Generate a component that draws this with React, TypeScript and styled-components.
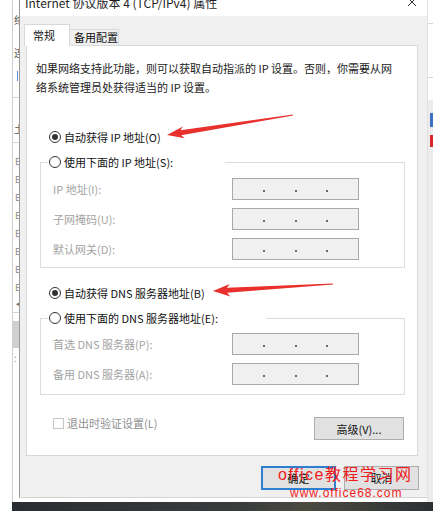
import styled, { createGlobalStyle } from "styled-components";

const GlobalStyle = createGlobalStyle`
  html, body {
    margin: 0;
    padding: 0;
    background: #fff;
  }
  body {
    font-family: "Noto Sans CJK SC", "Liberation Sans", sans-serif;
    overflow: hidden;
  }
`;

const Screen = styled.div`
  position: relative;
  width: 433px;
  height: 511px;
  overflow: hidden;
  display: flex;
  flex-direction: column;
  background: #fff;
`;

const Desktop = styled.div`
  display: flex;
  height: 502px;
`;

// strip of the window behind the dialog, on the left
const Outside = styled.div`
  width: 12px;
  flex: none;
  background: #fff;
`;

const BackWindow = styled.div`
  width: 6px;
  flex: none;
  border-left: 1px solid #cfcfcf;
  background: #fff;
  overflow: hidden;
  display: flex;
  flex-direction: column;
`;

const Frag = styled.div<{ $top: number; $color?: string }>`
  margin-top: ${(p) => p.$top}px;
  height: 12px;
  line-height: 12px;
  font-size: 10px;
  color: ${(p) => p.$color || "#555"};
  padding-left: 1px;
  white-space: nowrap;
`;

const IconFrag = styled.div`
  height: 18px;
  line-height: 18px;
  font-size: 9px;
  color: #8a8a8a;
  padding-left: 2px;
`;

const Rule = styled.div<{ $top: number }>`
  margin-top: ${(p) => p.$top}px;
  height: 1px;
  background: #d5d5d5;
`;

const Thumb = styled.div`
  margin-top: 8px;
  height: 27px;
  background: #d0d0d0;
`;

const Tick = styled.div`
  margin-top: 12px;
  margin-left: 4px;
  width: 1px;
  height: 10px;
  background: #5b8fd6;
`;

const Dialog = styled.div`
  width: 408px;
  height: 498px;
  flex: none;
  border-left: 1px solid #9a9a9a;
  border-bottom: 1px solid #d4d4d4;
  background: #f0f0f0;
  display: flex;
  flex-direction: column;
  box-sizing: border-box;
`;

const TitleBar = styled.div`
  height: 16px;
  flex: none;
  background: #fff;
  overflow: hidden;
  display: flex;
  justify-content: space-between;
  padding: 0 11px 0 5px;
`;

const TitleText = styled.div`
  margin-top: -5px;
  font-size: 12px;
  line-height: 16px;
  color: #1f1f1f;
  white-space: nowrap;
`;

const Body = styled.div`
  padding: 8px 9px 0 6px;
  display: flex;
  flex-direction: column;
`;

const TabBar = styled.div`
  display: flex;
  align-items: flex-end;
  height: 21px;
  margin-left: -2px;
`;

const Tab = styled.div<{ $active?: boolean }>`
  position: relative;
  z-index: 1;
  box-sizing: border-box;
  border: 1px solid #d9d9d9;
  border-bottom: none;
  font-size: 11px;
  color: #111;
  white-space: nowrap;
  ${(p) =>
    p.$active
      ? `
    width: 46px;
    height: 22px;
    margin-bottom: -1px;
    background: #fff;
    padding-left: 8px;
    line-height: 20px;
  `
      : `
    width: 49px;
    height: 16px;
    border-left: none;
    background: #f0f0f0;
    padding-left: 4px;
    line-height: 15px;
  `}
`;

const Panel = styled.div`
  height: 411px;
  box-sizing: border-box;
  border: 1px solid #d9d9d9;
  background: #fff;
  padding: 13px 12px 0 9px;
  display: flex;
  flex-direction: column;
`;

const Description = styled.p`
  margin: 0;
  font-size: 11px;
  line-height: 19px;
  color: #1a1a1a;
  white-space: nowrap;
`;

const RadioRow = styled.label<{ $top: number }>`
  display: flex;
  align-items: center;
  gap: 3px;
  margin-top: ${(p) => p.$top}px;
  margin-left: 13px;
  height: 14px;
  font-size: 11px;
  line-height: 14px;
  color: #111;
  white-space: nowrap;
`;

const RadioCircle = styled.span<{ $checked?: boolean }>`
  width: 12px;
  height: 12px;
  box-sizing: border-box;
  border: 1px solid #333;
  border-radius: 50%;
  background: #fff;
  display: flex;
  align-items: center;
  justify-content: center;
  flex: none;
  &::after {
    content: "";
    width: 6px;
    height: 6px;
    border-radius: 50%;
    background: ${(p) => (p.$checked ? "#333" : "transparent")};
  }
`;

const Group = styled.fieldset<{ $top: number; $pt: number; $pb: number }>`
  margin: ${(p) => p.$top}px 0 0 4px;
  padding: ${(p) => p.$pt}px 0 ${(p) => p.$pb}px 7px;
  border: 1px solid #dcdcdc;
  min-width: 0;
  display: grid;
  gap: 8px;
`;

const Legend = styled.legend<{ $width: number }>`
  padding: 0;
  width: ${(p) => p.$width}px;
`;

const FieldRow = styled.div`
  display: grid;
  grid-template-columns: 179px 127px;
  align-items: center;
  height: 22px;
  margin-left: 5px;
`;

const FieldLabel = styled.span`
  font-size: 11px;
  color: #a3a3a3;
  white-space: nowrap;
`;

const IpBox = styled.div`
  height: 22px;
  box-sizing: border-box;
  border: 1px solid #a9a9a9;
  background: #f0f0f0;
  display: flex;
  align-items: center;
`;

const IpPart = styled.span`
  flex: 1;
  height: 100%;
`;

const IpDot = styled.span`
  width: 2px;
  height: 2px;
  margin-top: 3px;
  background: #6a6a6a;
  flex: none;
`;

const Footer = styled.div`
  display: flex;
  justify-content: space-between;
  align-items: flex-start;
  margin: 22px 1px 0 17px;
`;

const CheckRow = styled.label`
  display: flex;
  align-items: center;
  gap: 3px;
  margin-top: 1px;
  font-size: 11px;
  line-height: 11px;
  color: #8f8f8f;
  white-space: nowrap;
`;

const CheckBox = styled.span`
  width: 11px;
  height: 11px;
  box-sizing: border-box;
  border: 1px solid #c6c6c6;
  background: #fff;
`;

const Button = styled.button<{ $default?: boolean; $w: number; $h: number }>`
  width: ${(p) => p.$w}px;
  height: ${(p) => p.$h}px;
  box-sizing: border-box;
  padding: 0;
  background: #e1e1e1;
  border: ${(p) => (p.$default ? "2px solid #2f7fd0" : "1px solid #adadad")};
  font-family: "Noto Sans CJK SC", "Liberation Sans", sans-serif;
  font-size: 11px;
  color: #111;
`;

const ButtonRow = styled.div`
  display: flex;
  justify-content: flex-end;
  gap: 8px;
  margin: 10px -1px 0 0;
`;

const RightStrip = styled.div`
  width: 5px;
  flex: none;
  border-left: 1px solid #e2e2e2;
  display: flex;
  flex-direction: column;
  background: #ececec;
`;

const RightTop = styled.div`
  height: 100px;
  background: #fff;
  display: flex;
  flex-direction: column;
`;

const Swatch = styled.div<{ $top: number; $h: number; $color: string }>`
  margin-top: ${(p) => p.$top}px;
  margin-left: 2px;
  height: ${(p) => p.$h}px;
  background: ${(p) => p.$color};
`;

const Taskbar = styled.div`
  height: 9px;
  margin-left: 12px;
  background: linear-gradient(90deg, #2a2e33, #3a3d3c 55%, #4a4a40 70%, #2c3034);
`;

// the red arrows and the site watermark lie over the dialog
const Overlay = styled.svg`
  position: absolute;
  inset: 0;
  pointer-events: none;
`;

const Watermark = styled.div`
  position: absolute;
  left: 278px;
  top: 466px;
  color: #f21b1b;
  pointer-events: none;
  white-space: nowrap;
`;

const MarkBig = styled.div`
  font-family: "Liberation Sans", "Noto Sans CJK SC", sans-serif;
  font-size: 16px;
  line-height: 18px;
  letter-spacing: 1.5px;
`;

const MarkSmall = styled.div`
  margin: 2px 0 0 12px;
  font-family: "Liberation Sans", sans-serif;
  font-size: 12px;
  line-height: 14px;
  letter-spacing: 1px;
`;

function IpInput() {
  return (
    <IpBox>
      <IpPart />
      <IpDot />
      <IpPart />
      <IpDot />
      <IpPart />
      <IpDot />
      <IpPart />
    </IpBox>
  );
}

const ipFields = ["IP 地址(I):", "子网掩码(U):", "默认网关(D):"];
const dnsFields = ["首选 DNS 服务器(P):", "备用 DNS 服务器(A):"];

export default function App() {
  return (
    <Screen>
      <GlobalStyle />
      <Desktop>
        <Outside />
        <BackWindow>
          <Frag $top={14}>络</Frag>
          <Frag $top={21}>连</Frag>
          <Tick />
          <Rule $top={16} />
          <Frag $top={25}>土</Frag>
          <Rule $top={7} />
          <div style={{ marginTop: 10 }}>
            {Array.from({ length: 8 }).map((_, i) => (
              <IconFrag key={i}>E</IconFrag>
            ))}
          </div>
          <Frag $top={0} $color="#666">◄</Frag>
          <Rule $top={3} />
          <Thumb />
          <Frag $top={4} $color="#999">:</Frag>
        </BackWindow>
        <Dialog>
          <TitleBar>
            <TitleText>Internet 协议版本 4 (TCP/IPv4) 属性</TitleText>
            <svg width="8" height="8" viewBox="0 0 8 8" style={{ marginTop: -2 }}>
              <path d="M0 0 L8 8 M8 0 L0 8" stroke="#333" strokeWidth="1" />
            </svg>
          </TitleBar>
          <Body>
            <TabBar>
              <Tab $active>常规</Tab>
              <Tab>备用配置</Tab>
            </TabBar>
            <Panel>
              <Description>
                如果网络支持此功能，则可以获取自动指派的 IP 设置。否则，你需要从网
                <br />
                络系统管理员处获得适当的 IP 设置。
              </Description>
              <RadioRow $top={33}>
                <RadioCircle $checked />
                自动获得 IP 地址(O)
              </RadioRow>
              <Group $top={11} $pt={9} $pb={7}>
                <Legend $width={177}>
                  <RadioRow $top={0} style={{ marginLeft: 1 }}>
                    <RadioCircle />
                    使用下面的 IP 地址(S):
                  </RadioRow>
                </Legend>
                {ipFields.map((f) => (
                  <FieldRow key={f}>
                    <FieldLabel>{f}</FieldLabel>
                    <IpInput />
                  </FieldRow>
                ))}
              </Group>
              <RadioRow $top={18}>
                <RadioCircle $checked />
                自动获得 DNS 服务器地址(B)
              </RadioRow>
              <Group $top={11} $pt={8} $pb={9}>
                <Legend $width={218}>
                  <RadioRow $top={0} style={{ marginLeft: 1 }}>
                    <RadioCircle />
                    使用下面的 DNS 服务器地址(E):
                  </RadioRow>
                </Legend>
                {dnsFields.map((f) => (
                  <FieldRow key={f}>
                    <FieldLabel>{f}</FieldLabel>
                    <IpInput />
                  </FieldRow>
                ))}
              </Group>
              <Footer>
                <CheckRow>
                  <CheckBox />
                  退出时验证设置(L)
                </CheckRow>
                <Button $w={90} $h={23}>高级(V)...</Button>
              </Footer>
            </Panel>
            <ButtonRow>
              <Button $default $w={75} $h={24}>确定</Button>
              <Button $w={75} $h={24}>取消</Button>
            </ButtonRow>
          </Body>
        </Dialog>
        <RightStrip>
          <RightTop>
            <Rule $top={23} />
            <Rule $top={53} />
          </RightTop>
          <Swatch $top={13} $h={14} $color="#3d6fc4" />
          <Swatch $top={8} $h={12} $color="#d8262a" />
        </RightStrip>
      </Desktop>
      <Taskbar />

      <Overlay width="433" height="511" viewBox="0 0 433 511">
        <polygon
          points="167,135 182.9,126.4 180.4,130.3 292.9,114.5 293.1,115.6 181.2,135.3 184.7,138.2"
          fill="#e8302c"
        />
        <polygon
          points="213,291 229.7,284 226.9,287.7 333,283.4 333,284.6 227.1,292.7 230.3,296.5"
          fill="#e8302c"
        />
      </Overlay>
      <Watermark>
        <MarkBig>office教程学习网</MarkBig>
        <MarkSmall>www.office68.com</MarkSmall>
      </Watermark>
    </Screen>
  );
}
